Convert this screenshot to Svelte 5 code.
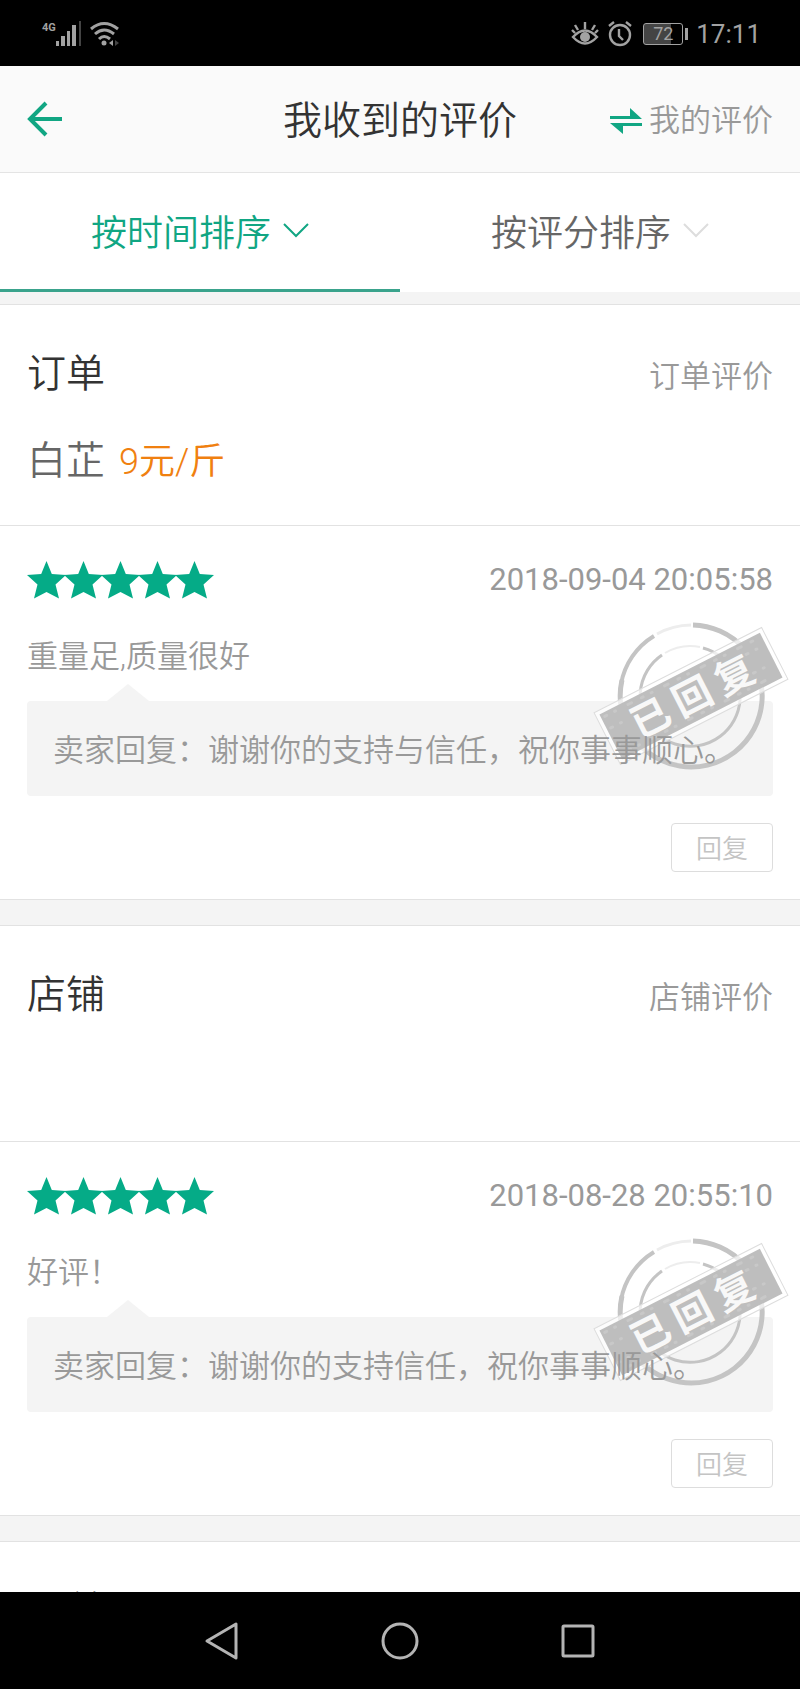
<script>
  let sortBy = "time";

  const tabs = [
    { key: "time", label: "按时间排序" },
    { key: "score", label: "按评分排序" },
  ];

  const reviews = [
    {
      title: "订单",
      type: "订单评价",
      product: "白芷",
      price: "9元/斤",
      stars: 5,
      date: "2018-09-04 20:05:58",
      comment: "重量足,质量很好",
      reply: "谢谢你的支持与信任，祝你事事顺心。",
    },
    {
      title: "店铺",
      type: "店铺评价",
      stars: 5,
      date: "2018-08-28 20:55:10",
      comment: "好评！",
      reply: "谢谢你的支持信任，祝你事事顺心。",
    },
    {
      title: "订单",
    },
  ];
</script>

<style>
  :global(body) {
    margin: 0;
    background: #000;
  }
  .app {
    display: flex;
    flex-direction: column;
    height: 100vh;
    background: #f4f4f4;
    color: #333;
    font-family: Roboto, "Noto Sans CJK SC", sans-serif;
    font-weight: 350;
  }
  button {
    margin: 0;
    padding: 0;
    border: 0;
    background: none;
    color: inherit;
    font: inherit;
    cursor: pointer;
  }
  svg {
    display: block;
    flex: none;
  }

  .status {
    display: flex;
    box-sizing: border-box;
    flex: none;
    align-items: center;
    justify-content: space-between;
    height: 66px;
    padding: 2px 39px 0 42px;
    background: #000;
    color: #a2a2a2;
    font-weight: 400;
  }
  .status-side {
    display: flex;
    align-items: center;
    gap: 8px;
  }
  .signal {
    display: flex;
  }
  .network {
    font-size: 11px;
    font-weight: 700;
    line-height: 14px;
  }
  .battery {
    display: flex;
    align-items: center;
    margin-left: 2px;
  }
  .battery-body {
    width: 38px;
    border: 1px solid #a2a2a2;
    border-radius: 3px;
    background: linear-gradient(90deg, #444 72%, #000 72%);
    font-size: 18px;
    line-height: 20px;
    text-align: center;
  }
  .battery-tip {
    width: 3px;
    height: 12px;
    margin-left: 2px;
    background: #a2a2a2;
  }
  .clock {
    font-size: 26px;
    line-height: 32px;
  }

  .header {
    display: grid;
    flex: none;
    grid-template-columns: 1fr auto 1fr;
    align-items: center;
    height: 106px;
    padding: 0 27px;
    border-bottom: 1px solid #e4e4e4;
    background: #fafafa;
  }
  .header h1 {
    margin: 0;
    padding-top: 4px;
    font-size: 39px;
    font-weight: inherit;
    line-height: 60px;
  }
  .back {
    justify-self: start;
  }
  .switch {
    display: flex;
    align-items: center;
    justify-self: end;
    gap: 7px;
    padding-top: 4px;
    color: #999;
    font-size: 31px;
    line-height: 48px;
    text-decoration: none;
  }

  .tabs {
    display: flex;
    flex: none;
    background: #fff;
  }
  .tab {
    display: flex;
    box-sizing: border-box;
    flex: 1;
    align-items: center;
    justify-content: center;
    gap: 12px;
    height: 119px;
    padding-bottom: 5px;
    color: #666;
    font-size: 36px;
  }
  .tab svg {
    color: #ddd;
  }
  .tab.active,
  .tab.active svg {
    color: #11a683;
  }
  .tab.active {
    box-shadow: inset 0 -3px #3aa38c;
  }

  .list {
    flex: 1;
    min-height: 0;
    padding-top: 12px;
    overflow-y: auto;
    scrollbar-width: none;
  }
  .card {
    margin-bottom: 25px;
    border-top: 1px solid #e2e2e2;
    border-bottom: 1px solid #e2e2e2;
    background: #fff;
  }
  .summary {
    box-sizing: border-box;
    min-height: 215px;
    padding: 39px 27px 33px;
  }
  .row {
    display: flex;
    align-items: baseline;
    justify-content: space-between;
  }
  .row h2 {
    margin: 0;
    font-size: 39px;
    font-weight: inherit;
    line-height: 60px;
  }
  .type {
    color: #999;
    font-size: 31px;
  }
  .product {
    margin: 27px 0 0;
    color: #666;
    font-size: 39px;
    line-height: 60px;
  }
  .price {
    margin-left: 14px;
    color: #f08010;
    font-size: 36px;
  }

  .review {
    position: relative;
    padding: 30px 27px 27px;
    border-top: 1px solid #e2e2e2;
    color: #999;
    font-size: 31px;
    line-height: 48px;
  }
  .review .row {
    align-items: center;
  }
  .stars {
    display: flex;
  }
  .date {
    font-weight: 400;
  }
  .comment {
    margin: 29px 0 20px;
  }
  .reply {
    position: relative;
    padding: 26px 26px 21px;
    border-radius: 4px;
    background: #f4f4f4;
  }
  .reply::before {
    position: absolute;
    bottom: 100%;
    left: 80px;
    border: solid transparent;
    border-width: 0 21px 17px;
    border-bottom-color: #f4f4f4;
    content: "";
  }
  .reply p {
    position: relative;
    z-index: 2;
    margin: 0;
  }
  .stamp {
    position: absolute;
    z-index: 1;
    top: 94px;
    right: 10px;
  }
  .stamp text {
    font-family: "Noto Sans CJK SC", sans-serif;
    font-size: 39px;
    font-weight: 700;
  }
  .actions {
    display: flex;
    justify-content: flex-end;
    margin-top: 27px;
  }
  .actions button {
    width: 102px;
    height: 49px;
    padding-top: 2px;
    border: 1px solid #ddd;
    border-radius: 4px;
    color: #c4c4c4;
    font-size: 26px;
    line-height: 40px;
  }

  .nav {
    display: flex;
    flex: none;
    justify-content: center;
    height: 97px;
    background: #000;
    color: #b4b4b4;
  }
  .nav button {
    display: grid;
    place-items: center;
    width: 178px;
  }
</style>

<div class="app">
  <div class="status">
    <div class="status-side">
      <div class="signal">
        <span class="network">4G</span>
        <svg width="26" height="26" viewBox="0 0 26 26" fill="currentColor">
          <rect x="0" y="20" width="3" height="5" />
          <rect x="5" y="15" width="4" height="10" />
          <rect x="11" y="10" width="3" height="15" />
          <rect x="16" y="4" width="4" height="21" />
          <rect x="23" y="0" width="2" height="25" fill="#444" />
        </svg>
      </div>
      <svg width="30" height="26" viewBox="0 0 30 26" fill="none" stroke="currentColor" stroke-width="3">
        <path d="M1 8Q14 -3 28 8M5 13Q14 5 24 13M9 18Q14 13 20 18" />
        <circle cx="14" cy="22" r="2.5" fill="currentColor" stroke="none" />
        <path d="M23 19v6l-4-3z" fill="currentColor" stroke="none" />
        <path d="M25 19v6l4-3z" fill="#444" stroke="none" />
      </svg>
    </div>
    <div class="status-side">
      <svg width="28" height="26" viewBox="0 0 28 26" fill="none" stroke="currentColor" stroke-width="2.4">
        <path d="M2 16Q14 3 26 16Q14 29 2 16ZM14 8V1M7 9L4 4M21 9L24 4M4 12L1 9M24 12L27 9" />
        <circle cx="14" cy="16" r="5" fill="currentColor" stroke="none" />
      </svg>
      <svg width="26" height="26" viewBox="0 0 26 26" fill="none" stroke="currentColor" stroke-width="2.4">
        <circle cx="13" cy="14" r="10" />
        <path d="M12 8V15L16 19M2 5L7 1M24 5L19 1" />
      </svg>
      <div class="battery">
        <div class="battery-body">72</div>
        <div class="battery-tip"></div>
      </div>
      <span class="clock">17:11</span>
    </div>
  </div>

  <header class="header">
    <button class="back" aria-label="返回">
      <svg width="36" height="36" viewBox="0 0 36 36" fill="none" stroke="#11a683" stroke-width="4">
        <path d="M19 2L3 18L19 34M3 18H35" />
      </svg>
    </button>
    <h1>我收到的评价</h1>
    <a class="switch" href="#mine">
      <svg width="32" height="26" viewBox="0 0 32 26" fill="#11a683">
        <path d="M0 8H20V0L32 11H0ZM32 18H13V26L0 15H32Z" />
      </svg>
      我的评价
    </a>
  </header>

  <div class="tabs">
    {#each tabs as tab}
      <button class="tab" class:active={sortBy === tab.key} on:click={() => (sortBy = tab.key)}>
        {tab.label}
        <svg width="26" height="16" viewBox="0 0 26 16" fill="none" stroke="currentColor" stroke-width="2">
          <path d="M1 2L13 14L25 2" />
        </svg>
      </button>
    {/each}
  </div>

  <main class="list">
    {#each reviews as review}
      <article class="card">
        <div class="summary">
          <div class="row">
            <h2>{review.title}</h2>
            {#if review.type}
              <span class="type">{review.type}</span>
            {/if}
          </div>
          {#if review.product}
            <p class="product">{review.product}<span class="price">{review.price}</span></p>
          {/if}
        </div>
        {#if review.comment}
          <div class="review">
            <div class="row">
              <div class="stars" role="img" aria-label="{review.stars}星">
                {#each Array(review.stars) as _}
                  <svg width="37" height="38" viewBox="0 0 37 38" fill="#05ab87" overflow="visible">
                    <path d="M19.5 0L24.8 13L39 14L28.5 23.5L32 37.5L19.5 31L7 37.5L10.5 23.5L0 14L14.2 13Z" />
                  </svg>
                {/each}
              </div>
              <time class="date">{review.date}</time>
            </div>
            <p class="comment">{review.comment}</p>
            <div class="reply">
              <p>卖家回复：{review.reply}</p>
            </div>
            <svg class="stamp" width="198" height="152" viewBox="-99 -76 198 152" fill="none" stroke="#c4c4c4">
              <path d="M2 -71A71 71 0 1 1 -69 -16" stroke-width="5" />
              <path d="M-70 -12A71 71 0 0 1 -37 -60" stroke-width="4" />
              <path d="M-34 -62A71 71 0 0 1 0 -71" stroke="#ededed" stroke-width="3" />
              <path d="M12 -48A50 50 0 1 1 -29 -41" stroke-width="3" />
              <path d="M-26 -43A50 50 0 0 1 9 -49" stroke="#ededed" stroke-width="2" />
              <g transform="rotate(-27)">
                <rect x="-94" y="-29" width="188" height="58" fill="#fff" fill-opacity="0.7" stroke="#ddd" />
                <rect x="-90" y="-25" width="180" height="50" fill="#bebebe" stroke="none" />
                <!-- worn ink -->
                <g stroke="#c8c8c8" stroke-width="3" stroke-linecap="round" stroke-dasharray="2 9 1 14 4 11">
                  <path d="M-86 -21H86M-80 20H84" />
                  <path d="M-88 12H-64M-86 -8H-66M68 -12H88M66 8H86" />
                </g>
                <g fill="#f8f8f8" stroke="none" text-anchor="middle">
                  <text x="-46" y="15">已</text>
                  <text x="1" y="15">回</text>
                  <text x="48" y="15">复</text>
                </g>
              </g>
            </svg>
            <div class="actions">
              <button>回复</button>
            </div>
          </div>
        {/if}
      </article>
    {/each}
  </main>

  <nav class="nav">
    <button aria-label="后退">
      <svg width="38" height="40" viewBox="0 0 38 40" fill="none" stroke="currentColor" stroke-width="3" stroke-linejoin="round">
        <path d="M4 20L33 3V37Z" />
      </svg>
    </button>
    <button aria-label="主页">
      <svg width="38" height="38" viewBox="0 0 38 38" fill="none" stroke="currentColor" stroke-width="3">
        <circle cx="19" cy="19" r="17" />
      </svg>
    </button>
    <button aria-label="最近任务">
      <svg width="34" height="34" viewBox="0 0 34 34" fill="none" stroke="currentColor" stroke-width="3">
        <rect x="2" y="2" width="30" height="30" rx="1" />
      </svg>
    </button>
  </nav>
</div>
